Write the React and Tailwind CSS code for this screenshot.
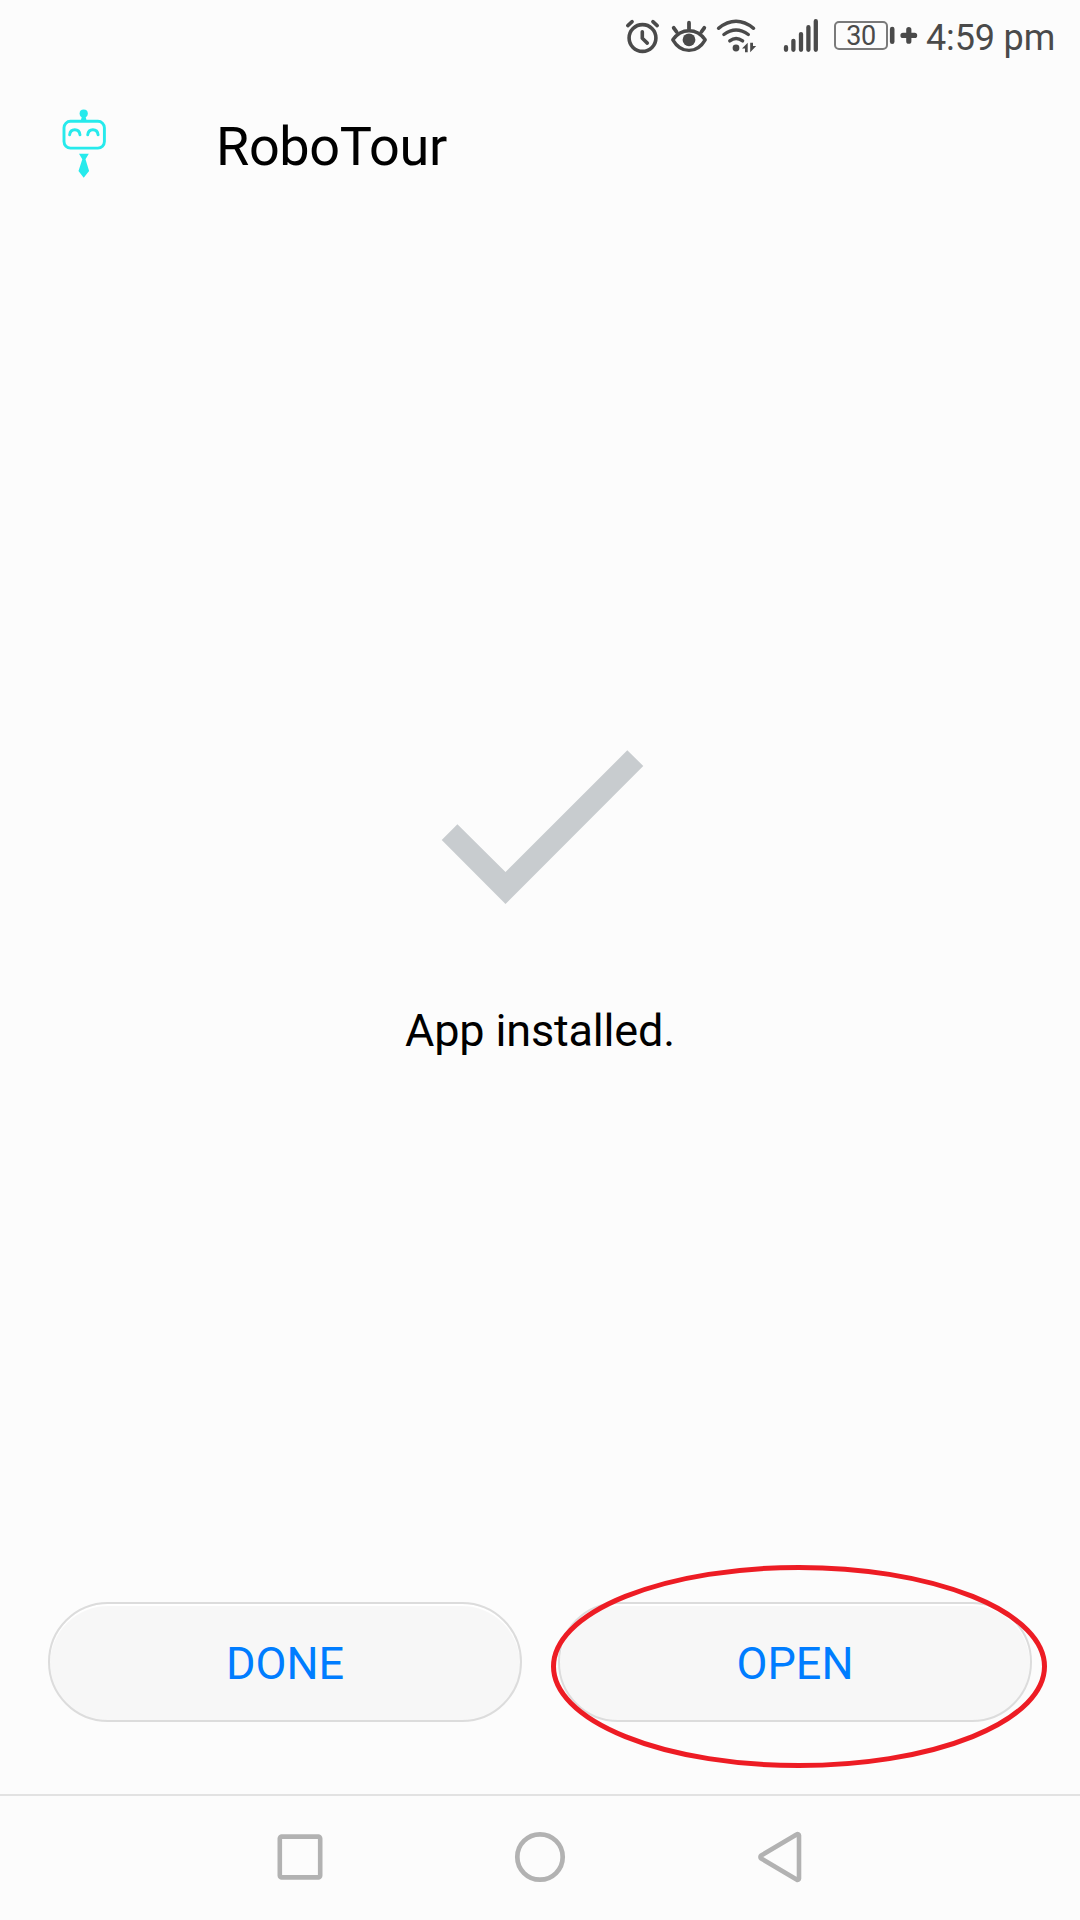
function AlarmIcon() {
  return (
    <svg className="ml-[624px] h-[72px] w-[38px]" viewBox="624 0 38 72" fill="none" stroke="#4a4a4a" strokeWidth="3.6" strokeLinecap="round" strokeLinejoin="round">
      <circle cx="642.5" cy="38" r="13.4" />
      <path d="M627.8 25.6l4.3-3.9M657.2 25.6l-4.3-3.9" />
      <path d="M642.3 31.7v6.6l5 4.8" />
    </svg>
  );
}

function EyeIcon() {
  return (
    <svg className="ml-2 h-[72px] w-10" viewBox="670 0 40 72" fill="none" stroke="#4a4a4a" strokeWidth="3.4" strokeLinecap="round" strokeLinejoin="round">
      <path d="M672.8 39.8C677 33.8 682.5 30.7 689 30.7s12 3.1 16.2 9.1C701 47 695.5 50.4 689 50.4s-12-3.4-16.2-10.6z" />
      <circle cx="689" cy="39.8" r="6.4" fill="#4a4a4a" stroke="none" />
      <path d="M689 22.7v6M673.7 27.8l3 4.2M704.3 27.8l-3 4.2" strokeWidth="3.8" />
    </svg>
  );
}

function WifiIcon() {
  return (
    <svg className="ml-[6px] h-[72px] w-11" viewBox="716 0 44 72" fill="none" stroke="#4a4a4a" strokeWidth="3.4" strokeLinecap="round">
      <path d="M718.5 28.3Q736 14.3 753.6 28.3" />
      <path d="M723.9 34.5Q736 25.3 748.3 34.5" />
      <path d="M729.8 40.9Q736 36 742.6 40.9" />
      <circle cx="736" cy="48" r="3.4" fill="#4a4a4a" stroke="none" />
      <path d="M742 48.5l5.7-5.8v9.6h-2.7v-3.8zM750.2 42.7h2.8v3.3h3.2l-6 6.3z" fill="#4a4a4a" stroke="none" />
    </svg>
  );
}

function SignalIcon() {
  return (
    <svg className="ml-[22px] h-[72px] w-10" viewBox="782 0 40 72" fill="none" stroke="#4a4a4a" strokeWidth="4.3" strokeLinecap="round">
      <path d="M786 47.2v2.6M793.4 40.8v9M801 34.1v15.7M808.4 27.2v22.6M815.8 21.2v28.6" />
    </svg>
  );
}

function BatteryIndicator() {
  return (
    <div className="ml-[12px] flex h-[72px] items-start">
      <div className="mt-[21px] flex h-[29px] w-[54px] items-center justify-center rounded-[5px] border-2 border-[#7a7a7a] pt-[2px]">
        <span className="text-[27px] leading-[27px] tracking-[-0.3px]">30</span>
      </div>
      <svg className="h-[72px] w-[32px]" viewBox="888 0 32 72" fill="none" stroke="#4a4a4a" strokeLinecap="round">
        <path d="M892.2 29v12.8" strokeWidth="4.6" />
        <path d="M903 35.4h11.6M908.8 29.6v11.6" strokeWidth="5.2" />
      </svg>
    </div>
  );
}

function StatusBar() {
  return (
    <div className="flex h-[72px] w-full items-start overflow-hidden text-[#4a4a4a]">
      <AlarmIcon />
      <EyeIcon />
      <WifiIcon />
      <SignalIcon />
      <BatteryIndicator />
      <span className="ml-[6px] mt-[17px] whitespace-nowrap text-[36px] leading-[42px] tracking-[-0.15px]">4:59 pm</span>
    </div>
  );
}

function RobotLogo() {
  return (
    <svg className="h-[80px] w-[56px] shrink-0" viewBox="56 104 56 80" fill="none" stroke="#26eaec" strokeLinecap="round">
      <circle cx="83.7" cy="113.6" r="4.1" fill="#26eaec" stroke="none" />
      <path d="M82 116h3.4l1.3 5h-6z" fill="#26eaec" stroke="none" />
      <rect x="64" y="121.3" width="40.4" height="26.8" rx="6.5" strokeWidth="2.9" />
      <path d="M69.6 134.8c.8-6.8 9.6-6.8 10.4 0M87.7 134.8c.8-6.8 9.6-6.8 10.4 0" strokeWidth="2.9" />
      <path d="M79 153.8h9.8l-3.3 5.5 3.6 11.7-5.4 6.8-5.2-6.8 3.8-11.7z" fill="#26eaec" stroke="none" />
    </svg>
  );
}

function PillButton({ children }) {
  return (
    <button className="h-[120px] flex-1 rounded-full border-2 border-[#dcdcdc] bg-[#f7f7f7] pt-[2px] text-[45px] leading-none text-[#007dff] shadow-[inset_0_2px_1px_#ffffff]">
      {children}
    </button>
  );
}

function NavBar() {
  return (
    <nav className="flex h-[126px] items-start border-t-2 border-[#e2e2e2] pl-[270px] pt-[31px]">
      <svg className="h-[60px] w-[60px]" viewBox="270 1827 60 60" fill="none" stroke="#b2b2b2" strokeWidth="4.6">
        <rect x="279.8" y="1836.6" width="40.4" height="40.8" rx="2" />
      </svg>
      <svg className="ml-[180px] h-[60px] w-[60px]" viewBox="510 1827 60 60" fill="none" stroke="#b2b2b2" strokeWidth="4.7">
        <circle cx="540" cy="1857" r="22.7" />
      </svg>
      <svg className="ml-[180px] h-[60px] w-[60px]" viewBox="750 1827 60 60" fill="none" stroke="#b2b2b2" strokeWidth="4.6" strokeLinejoin="round">
        <path d="M799 1835.3a1.3 1.3 0 0 0-2-1L761.2 1855.5a1.8 1.8 0 0 0 0 3L797 1879.7a1.3 1.3 0 0 0 2-1z" />
      </svg>
    </nav>
  );
}

export default function App() {
  return (
    <div className="flex h-[1920px] w-[1080px] flex-col overflow-hidden bg-[#fcfcfc] font-['Roboto',sans-serif] text-black">
      <StatusBar />
      <header className="flex h-[152px] items-start pl-[56px] pt-[32px]">
        <RobotLogo />
        <h1 className="ml-[104px] mt-[11px] text-[54px] leading-[64px] tracking-[-0.35px]">RoboTour</h1>
      </header>
      <main className="flex flex-1 flex-col items-center pt-[520px]">
        <svg className="ml-[6px] h-[168px] w-[210px]" viewBox="438 744 210 168">
          <path d="M627.3 750.3L643.3 766 505.5 904 441.7 840l15.7-15.8 48.1 47.8z" fill="#c8cccf" />
        </svg>
        <p className="mt-[92px] text-[45px] leading-[54px] tracking-[-0.17px]">App installed.</p>
      </main>
      <div className="relative flex h-[192px] shrink-0 gap-9 px-12">
        <PillButton>DONE</PillButton>
        <PillButton>OPEN</PillButton>
        <svg className="pointer-events-none absolute left-[548px] top-[-40px] h-[210px] w-[504px]" viewBox="548 1562 504 210" fill="none">
          <ellipse cx="799" cy="1666.5" rx="245.5" ry="99.1" stroke="#ed1c24" strokeWidth="5" />
        </svg>
      </div>
      <NavBar />
    </div>
  );
}
